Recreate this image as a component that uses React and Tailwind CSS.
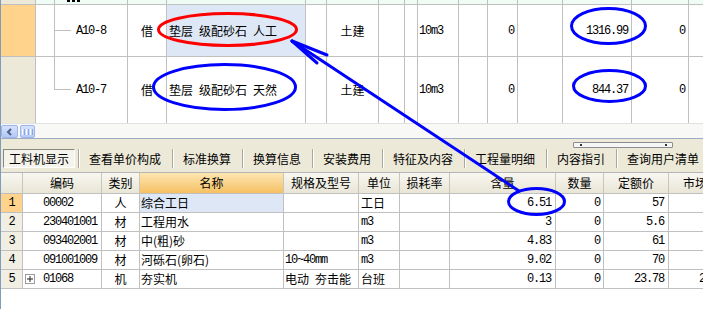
import React from "react";

const MONO = "font-['Liberation_Mono',monospace] tracking-[-1.2px]";
const G = "border-[#c0c0c0]";

function Words({ parts }) {
  return (
    <span className="flex items-center whitespace-nowrap">
      {parts.map((p, i) => (
        <span key={i} className={i < parts.length - 1 ? "mr-[6px]" : ""}>{p}</span>
      ))}
    </span>
  );
}

function TopTable() {
  return (
    <div className="flex flex-col">
      {/* partial previous row */}
      <div className={`flex h-[5px] border-b ${G}`}>
        <div className={`w-[35px] shrink-0 border-r ${G} bg-[#ece9d8]`} />
        <div className={`relative w-[92px] shrink-0 border-r ${G} bg-[#effcf6]`}>
          <div className="absolute left-[18px] top-0 bottom-0 w-px bg-[#c0c0c0]" />
          <div className="absolute left-[31px] top-0 w-[3px] h-[2px] bg-black" />
          <div className="absolute left-[36px] top-0 w-[3px] h-[2px] bg-black" />
          <div className="absolute left-[41px] top-0 w-[3px] h-[2px] bg-black" />
        </div>
        <div className={`w-[39px] shrink-0 border-r ${G} bg-[#effcf6]`} />
        <div className={`w-[139px] shrink-0 border-r ${G} bg-[#effcf6]`} />
        <div className={`w-[21px] shrink-0 border-r ${G} bg-[#effcf6]`} />
        <div className={`w-[52px] shrink-0 border-r ${G} bg-[#effcf6]`} />
        <div className={`w-[26px] shrink-0 border-r ${G} bg-[#effcf6]`} />
        <div className={`w-[13px] shrink-0 border-r ${G} bg-[#effcf6]`} />
        <div className={`w-[41px] shrink-0 border-r ${G} bg-[#effcf6]`} />
        <div className={`w-[29px] shrink-0 border-r ${G} bg-[#effcf6]`} />
        <div className={`w-[30px] shrink-0 border-r ${G} bg-[#effcf6]`} />
        <div className={`w-[45px] shrink-0 border-r ${G} bg-[#effcf6]`} />
        <div className={`w-[69px] shrink-0 border-r ${G} bg-[#effcf6]`} />
        <div className={`w-[57px] shrink-0 border-r ${G} bg-[#effcf6]`} />
        <div className="flex-1 bg-[#effcf6]" />
      </div>

      {/* row A10-8 */}
      <div className={`flex h-[52px] border-b ${G}`}>
        <div className={`w-[35px] shrink-0 border-r ${G} bg-[#ffd38b]`} />
        <div className={`relative w-[92px] shrink-0 border-r ${G} flex items-center pl-[40px] ${MONO}`}>
          <div className="absolute left-[18px] top-0 bottom-0 w-px bg-[#c0c0c0]" />
          <div className="absolute left-[18px] top-[25px] w-[17px] h-px bg-[#c0c0c0]" />
          A10-8
        </div>
        <div className={`w-[39px] shrink-0 border-r ${G} flex items-center justify-center`}>借</div>
        <div className={`w-[139px] shrink-0 border-r ${G} bg-[#dde7f5] flex items-center pl-[2px]`}>
          <Words parts={["垫层", "级配砂石", "人工"]} />
        </div>
        <div className={`w-[21px] shrink-0 border-r ${G}`} />
        <div className={`w-[52px] shrink-0 border-r ${G} flex items-center justify-center`}>土建</div>
        <div className={`w-[26px] shrink-0 border-r ${G}`} />
        <div className={`w-[13px] shrink-0 border-r ${G}`} />
        <div className={`w-[41px] shrink-0 border-r ${G} flex items-center pl-[1px] ${MONO}`}>10m3</div>
        <div className={`w-[29px] shrink-0 border-r ${G}`} />
        <div className={`w-[30px] shrink-0 border-r ${G} flex items-center justify-end pr-[3px] ${MONO}`}>0</div>
        <div className={`w-[45px] shrink-0 border-r ${G}`} />
        <div className={`w-[69px] shrink-0 border-r ${G} flex items-center justify-end pr-[3px] ${MONO}`}>1316.99</div>
        <div className={`w-[57px] shrink-0 border-r ${G} flex items-center justify-end pr-[3px] ${MONO}`}>0</div>
        <div className="flex-1" />
      </div>

      {/* row A10-7 */}
      <div className="flex h-[66px]">
        <div className={`w-[35px] shrink-0 border-r ${G} bg-[#ece9d8]`} />
        <div className={`relative w-[92px] shrink-0 border-r ${G} flex items-center pl-[40px] ${MONO}`}>
          <div className="absolute left-[18px] top-0 h-[33px] w-px bg-[#c0c0c0]" />
          <div className="absolute left-[18px] top-[32px] w-[17px] h-px bg-[#c0c0c0]" />
          A10-7
        </div>
        <div className={`w-[39px] shrink-0 border-r ${G} flex items-center justify-center`}>借</div>
        <div className={`w-[139px] shrink-0 border-r ${G} flex items-center pl-[2px]`}>
          <Words parts={["垫层", "级配砂石", "天然"]} />
        </div>
        <div className={`w-[21px] shrink-0 border-r ${G}`} />
        <div className={`w-[52px] shrink-0 border-r ${G} flex items-center justify-center`}>土建</div>
        <div className={`w-[26px] shrink-0 border-r ${G}`} />
        <div className={`w-[13px] shrink-0 border-r ${G}`} />
        <div className={`w-[41px] shrink-0 border-r ${G} flex items-center pl-[1px] ${MONO}`}>10m3</div>
        <div className={`w-[29px] shrink-0 border-r ${G}`} />
        <div className={`w-[30px] shrink-0 border-r ${G} flex items-center justify-end pr-[3px] ${MONO}`}>0</div>
        <div className={`w-[45px] shrink-0 border-r ${G}`} />
        <div className={`w-[69px] shrink-0 border-r ${G} flex items-center justify-end pr-[3px] ${MONO}`}>844.37</div>
        <div className={`w-[57px] shrink-0 border-r ${G} flex items-center justify-end pr-[3px] ${MONO}`}>0</div>
        <div className="flex-1" />
      </div>
    </div>
  );
}

function Scrollbar() {
  return (
    <div className="flex h-[15px] border-t border-[#e2e2e2] bg-[#f8f8f6] items-start">
      <div className="mt-[1px] w-[17px] h-[13px] rounded-[2px] border border-[#9fb5ea] bg-linear-to-b from-[#d6e2fd] to-[#b3c8f7] flex items-center justify-center">
        <svg width="7" height="8" viewBox="0 0 7 8">
          <path d="M5 1 L2 4 L5 7" fill="none" stroke="#4d6185" strokeWidth="2" />
        </svg>
      </div>
      <div className="mt-[1px] ml-[2px] w-[15px] h-[13px] rounded-[2px] border border-[#9fb5ea] bg-linear-to-b from-[#d6e2fd] to-[#b6cbf8] flex items-center justify-center gap-[1px]">
        <div className="w-px h-[6px] bg-white" />
        <div className="w-px h-[6px] bg-[#8ea7e0]" />
        <div className="w-px h-[6px] bg-white" />
        <div className="w-px h-[6px] bg-[#8ea7e0]" />
        <div className="w-px h-[6px] bg-white" />
        <div className="w-px h-[6px] bg-[#8ea7e0]" />
      </div>
    </div>
  );
}

function Sep() {
  return (
    <div className="flex h-[19px] shrink-0">
      <div className="w-px bg-[#aca899]" />
      <div className="w-px bg-white" />
    </div>
  );
}

function Tab({ children }) {
  return (
    <div className="h-[19px] pl-[9px] pr-[11px] flex items-center shrink-0 whitespace-nowrap">{children}</div>
  );
}

function TabBar() {
  return (
    <div className="relative h-[33px] bg-[#ece9d8] flex items-start pt-[10px] pl-[2px]">
      <div className="w-[72px] h-[19px] shrink-0 border border-t-[#8a887c] border-l-[#8a887c] border-b-white border-r-white bg-[#f5f4ec] flex items-center justify-center">
        工料机显示
      </div>
      <div className="ml-[3px]" />
      <Sep />
      <Tab>查看单价构成</Tab>
      <Sep />
      <Tab>标准换算</Tab>
      <Sep />
      <Tab>换算信息</Tab>
      <Sep />
      <Tab>安装费用</Tab>
      <Sep />
      <Tab>特征及内容</Tab>
      <Sep />
      <Tab>工程量明细</Tab>
      <Sep />
      <Tab>内容指引</Tab>
      <Sep />
      <Tab>查询用户清单</Tab>
      <div className="absolute left-[572px] top-[3px] w-[100px] h-[6px] rounded-[1px] border border-[#8c8c8c] bg-[#f6f6f6]">
        <div className="absolute left-[6px] top-[1px] w-[2px] h-[2px] bg-[#333]" />
        <div className="absolute left-[91px] top-[1px] w-[2px] h-[2px] bg-[#333]" />
      </div>
    </div>
  );
}

const rows = [
  { n: "1", code: "00002", cat: "人", name: "综合工日", spec: null, unit: "工日", unitCjk: true, qty: "6.51", num: "0", price: "57", sel: true },
  { n: "2", code: "230401001", cat: "材", name: "工程用水", spec: null, unit: "m3", unitCjk: false, qty: "3", num: "0", price: "5.6" },
  { n: "3", code: "093402001", cat: "材", name: "中(粗)砂", spec: null, unit: "m3", unitCjk: false, qty: "4.83", num: "0", price: "61" },
  { n: "4", code: "091001009", cat: "材", name: "河砾石(卵石)", spec: "mono", unit: "m3", unitCjk: false, qty: "9.02", num: "0", price: "70" },
  { n: "5", code: "01068", cat: "机", name: "夯实机", spec: "cjk", unit: "台班", unitCjk: true, qty: "0.13", num: "0", price: "23.78", plus: true },
];

const HB = "border-r border-[#c9c6b6] flex items-center justify-center shrink-0";

function BottomTable() {
  return (
    <div className="flex flex-col">
      <div className="flex h-[22px] border-t border-b border-t-[#b5b5b5] border-b-[#c0c0c0] bg-linear-to-b from-[#f8f7f1] to-[#e9e6d7]">
        <div className={`w-[22px] ${HB}`} />
        <div className={`w-[79px] ${HB}`}>编码</div>
        <div className={`w-[38px] ${HB}`}>类别</div>
        <div className={`w-[144px] ${HB} bg-linear-to-b from-[#fde6b1] to-[#f5c062]`}>名称</div>
        <div className={`w-[75px] ${HB}`}>规格及型号</div>
        <div className={`w-[41px] ${HB}`}>单位</div>
        <div className={`w-[50px] ${HB}`}>损耗率</div>
        <div className={`w-[106px] ${HB}`}>含量</div>
        <div className={`w-[48px] ${HB}`}>数量</div>
        <div className={`w-[65px] ${HB}`}>定额价</div>
        <div className={`w-[65px] ${HB}`}>市场价</div>
      </div>
      {rows.map((r) => (
        <div key={r.n} className={`flex h-[19px] border-b ${G}`}>
          <div className={`w-[22px] shrink-0 border-r ${G} flex items-center justify-center ${MONO} ${r.sel ? "bg-[#ffd38b]" : "bg-[#f1efe3]"}`}>{r.n}</div>
          <div className={`w-[79px] shrink-0 border-r ${G} flex items-center ${r.plus ? "pl-[2px]" : "pl-[20px]"}`}>
            {r.plus && (
              <div className="w-[10px] h-[10px] mr-[8px] border border-[#9c9c9c] bg-white flex items-center justify-center">
                <svg width="6" height="6" viewBox="0 0 6 6">
                  <path d="M0 3 H6 M3 0 V6" stroke="#222" strokeWidth="1" />
                </svg>
              </div>
            )}
            <span className={MONO}>{r.code}</span>
          </div>
          <div className={`w-[38px] shrink-0 border-r ${G} flex items-center justify-center`}>{r.cat}</div>
          <div className={`w-[144px] shrink-0 border-r ${G} flex items-center pl-[1px] ${r.sel ? "bg-[#dde7f5]" : ""}`}>{r.name}</div>
          <div className={`w-[75px] shrink-0 border-r ${G} flex items-center pl-[1px]`}>
            {r.spec === "mono" && <span className={MONO}>10~40mm</span>}
            {r.spec === "cjk" && <Words parts={["电动", "夯击能"]} />}
          </div>
          <div className={`w-[41px] shrink-0 border-r ${G} flex items-center pl-[2px] ${r.unitCjk ? "" : MONO}`}>{r.unit}</div>
          <div className={`w-[50px] shrink-0 border-r ${G}`} />
          <div className={`w-[106px] shrink-0 border-r ${G} flex items-center justify-end pr-[4px] ${MONO}`}>{r.qty}</div>
          <div className={`w-[48px] shrink-0 border-r ${G} flex items-center justify-end pr-[3px] ${MONO}`}>{r.num}</div>
          <div className={`w-[65px] shrink-0 border-r ${G} flex items-center justify-end pr-[4px] ${MONO}`}>{r.price}</div>
          <div className={`w-[65px] shrink-0 border-r ${G} flex items-center justify-end pr-[4px] ${MONO}`}>{r.price}</div>
        </div>
      ))}
    </div>
  );
}

function Annotations() {
  return (
    <svg className="absolute left-[-1px] top-0 pointer-events-none" width="703" height="309" viewBox="0 0 703 309">
      <ellipse cx="227.5" cy="29.5" rx="69" ry="16" fill="none" stroke="#ff0000" strokeWidth="3" />
      <g fill="none" stroke="#0000ff" strokeWidth="3">
        <ellipse cx="224.5" cy="87" rx="71" ry="22.5" />
        <ellipse cx="608.5" cy="26" rx="37" ry="17.5" />
        <ellipse cx="609.5" cy="86" rx="36" ry="15.5" />
        <ellipse cx="536.5" cy="201.5" rx="28" ry="13" />
      </g>
      <g fill="none" stroke="#0000ff" strokeWidth="3" strokeLinecap="round">
        <line x1="519" y1="191" x2="292" y2="41" />
        <line x1="292" y1="41" x2="327" y2="55" />
        <line x1="292" y1="41" x2="317" y2="63" />
      </g>
    </svg>
  );
}

export default function App() {
  return (
    <div className="relative w-[703px] h-[309px] overflow-hidden bg-white border-l border-[#7f9db9] font-['Noto_Sans_CJK_SC',sans-serif] text-[12px] leading-none text-black">
      <TopTable />
      <Scrollbar />
      <div className="h-px bg-[#9eabc0]" />
      <TabBar />
      <BottomTable />
      <Annotations />
    </div>
  );
}
